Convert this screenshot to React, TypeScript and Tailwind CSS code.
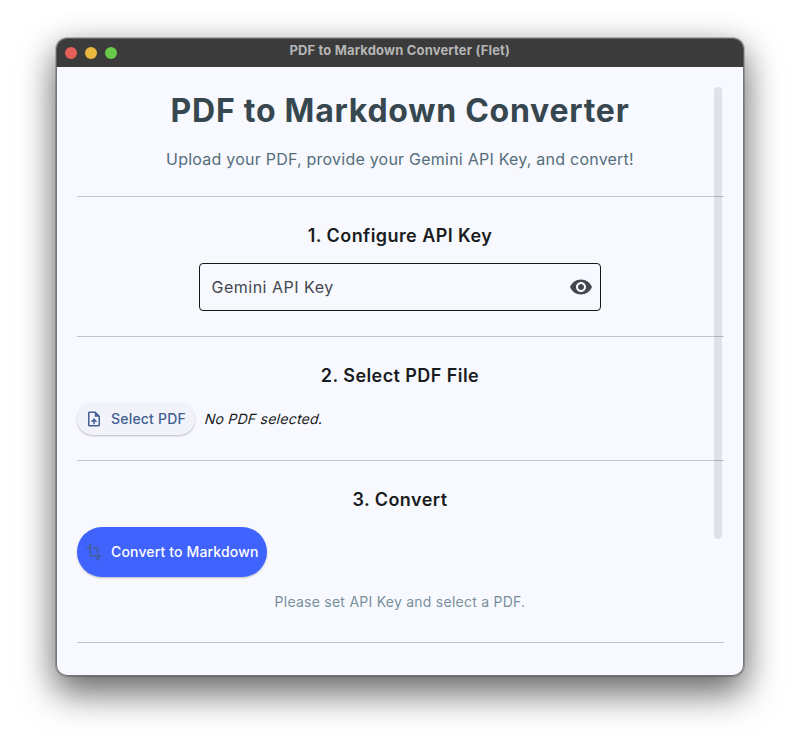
import type { ReactNode } from "react";

function Divider() {
  return <hr className="h-px w-full shrink-0 border-0 bg-[#c3c4ca]" />;
}

function Icon({ d, className }: { d: string; className: string }) {
  return (
    <svg viewBox="0 0 24 24" fill="currentColor" className={className} aria-hidden="true">
      <path d={d} />
    </svg>
  );
}

function Heading({ children }: { children: ReactNode }) {
  return (
    <h2 className="text-center text-[18px] leading-6 font-semibold tracking-[0.43px] whitespace-nowrap text-[#191c20]">
      {children}
    </h2>
  );
}

const UPLOAD_FILE =
  "M14 2H6c-1.1 0-1.99.9-1.99 2L4 20c0 1.1.89 2 1.99 2H18c1.1 0 2-.9 2-2V8l-6-6zm4 18H6V4h7v5h5v11zM8 15.01l1.41 1.41L11 14.84V19h2v-4.16l1.59 1.59L16 15.01 12.01 11 8 15.01z";
const TRANSFORM =
  "M22 18v-2H8V4h2L7 1 4 4h2v2H2v2h4v8c0 1.1.9 2 2 2h8v2h-2l3 3 3-3h-2v-2h4zM10 8h6v6h2V8c0-1.1-.9-2-2-2h-6v2z";
const VISIBILITY =
  "M12 4.5C7 4.5 2.73 7.61 1 12c1.73 4.39 6 7.5 11 7.5s9.27-3.11 11-7.5c-1.73-4.39-6-7.5-11-7.5zM12 17c-2.76 0-5-2.24-5-5s2.24-5 5-5 5 2.24 5 5-2.24 5-5 5zm0-8c-1.66 0-3 1.34-3 3s1.34 3 3 3 3-1.34 3-3-1.34-3-3-3z";

export default function App() {
  return (
    <div className="h-[750px] w-[800px] overflow-hidden bg-white px-14 pt-[38px] font-['Inter',sans-serif]">
      <div className="flex h-[638px] w-[688px] flex-col rounded-[11px] shadow-[0_0_0_1px_rgba(0,0,0,0.2),0_18px_36px_rgba(0,0,0,0.5),0_6px_32px_rgba(0,0,0,0.22)]">
        <header className="flex h-[29px] shrink-0 items-center rounded-t-[11px] border border-b-0 border-[#606060] bg-[#3b3b3b] pr-[7px] pl-[7.5px]">
          <div className="flex w-[53px] gap-2">
            <span className="size-3 rounded-full bg-[#e55f58]" />
            <span className="size-3 rounded-full bg-[#eab73f]" />
            <span className="size-3 rounded-full bg-[#69c94a]" />
          </div>
          <div className="flex-1 pr-[54px] pb-1.5 text-center text-[13px] leading-4 font-bold tracking-[0.16px] whitespace-nowrap text-[#b5b5b5]">
            PDF to Markdown Converter (Flet)
          </div>
        </header>

        <main className="relative flex flex-1 flex-col rounded-b-[11px] border border-t-0 border-[#74757a] bg-[#f8f9ff] pr-[19.5px] pl-[19.5px]">
          <section className="flex h-[129px] shrink-0 flex-col items-center pt-[24px]">
            <h1 className="text-[32px] leading-10 font-bold tracking-[0.75px] whitespace-nowrap text-[#37474f]">
              PDF to Markdown Converter
            </h1>
            <p className="mt-[16px] text-[16px] leading-6 tracking-[0.23px] whitespace-nowrap text-[#546e7a]">
              Upload your PDF, provide your Gemini API Key, and convert!
            </p>
          </section>
          <Divider />

          <section className="flex h-[139px] shrink-0 flex-col items-center pt-[27px]">
            <Heading>1. Configure API Key</Heading>
            <div className="mt-[15px] flex h-12 w-[402px] items-center justify-between rounded-[4px] border border-[#15171b] pr-[7px] pl-[11.5px]">
              <span className="text-[16px] tracking-[0.5px] text-[#43474e]">Gemini API Key</span>
              <Icon d={VISIBILITY} className="size-6 text-[#43474e]" />
            </div>
          </section>
          <Divider />

          <section className="flex h-[123px] shrink-0 flex-col pt-[27px]">
            <Heading>2. Select PDF File</Heading>
            <div className="mt-[15px] flex items-center gap-[10px]">
              <button className="flex h-8 w-[118px] items-center gap-2 rounded-full bg-[#f2f3fa] pb-px pl-[8.5px] text-[14px] font-medium tracking-[0.2px] whitespace-nowrap text-[#415f91] shadow-[0_1px_2px_rgba(0,0,0,0.25)]">
                <Icon d={UPLOAD_FILE} className="size-[18px] shrink-0" />
                Select PDF
              </button>
              <span className="inline-block -skew-x-[15deg] pb-px text-[14px] tracking-[0.25px] whitespace-nowrap text-[#191c20]">
                No PDF selected.
              </span>
            </div>
          </section>
          <Divider />

          <section className="flex h-[181px] shrink-0 flex-col pt-[27px]">
            <Heading>3. Convert</Heading>
            <button className="mt-[15px] flex h-[50px] w-[190px] items-center gap-2 rounded-full bg-[#4062fd] pb-px pl-[8.5px] text-[14px] font-medium tracking-[0.15px] whitespace-nowrap text-white shadow-[0_1px_2px_rgba(0,0,0,0.25)]">
              <Icon d={TRANSFORM} className="size-[18px] shrink-0 text-[#415f91]" />
              Convert to Markdown
            </button>
            <p className="mt-[15px] text-center text-[14px] leading-5 tracking-[0.25px] whitespace-nowrap text-[#78909c]">
              Please set API Key and select a PDF.
            </p>
          </section>
          <Divider />

          {/* Overlay scrollbar thumb */}
          <div className="absolute top-[19.5px] right-[21.5px] h-[452px] w-2 rounded-full bg-[#191c20]/10" />
        </main>
      </div>
    </div>
  );
}
